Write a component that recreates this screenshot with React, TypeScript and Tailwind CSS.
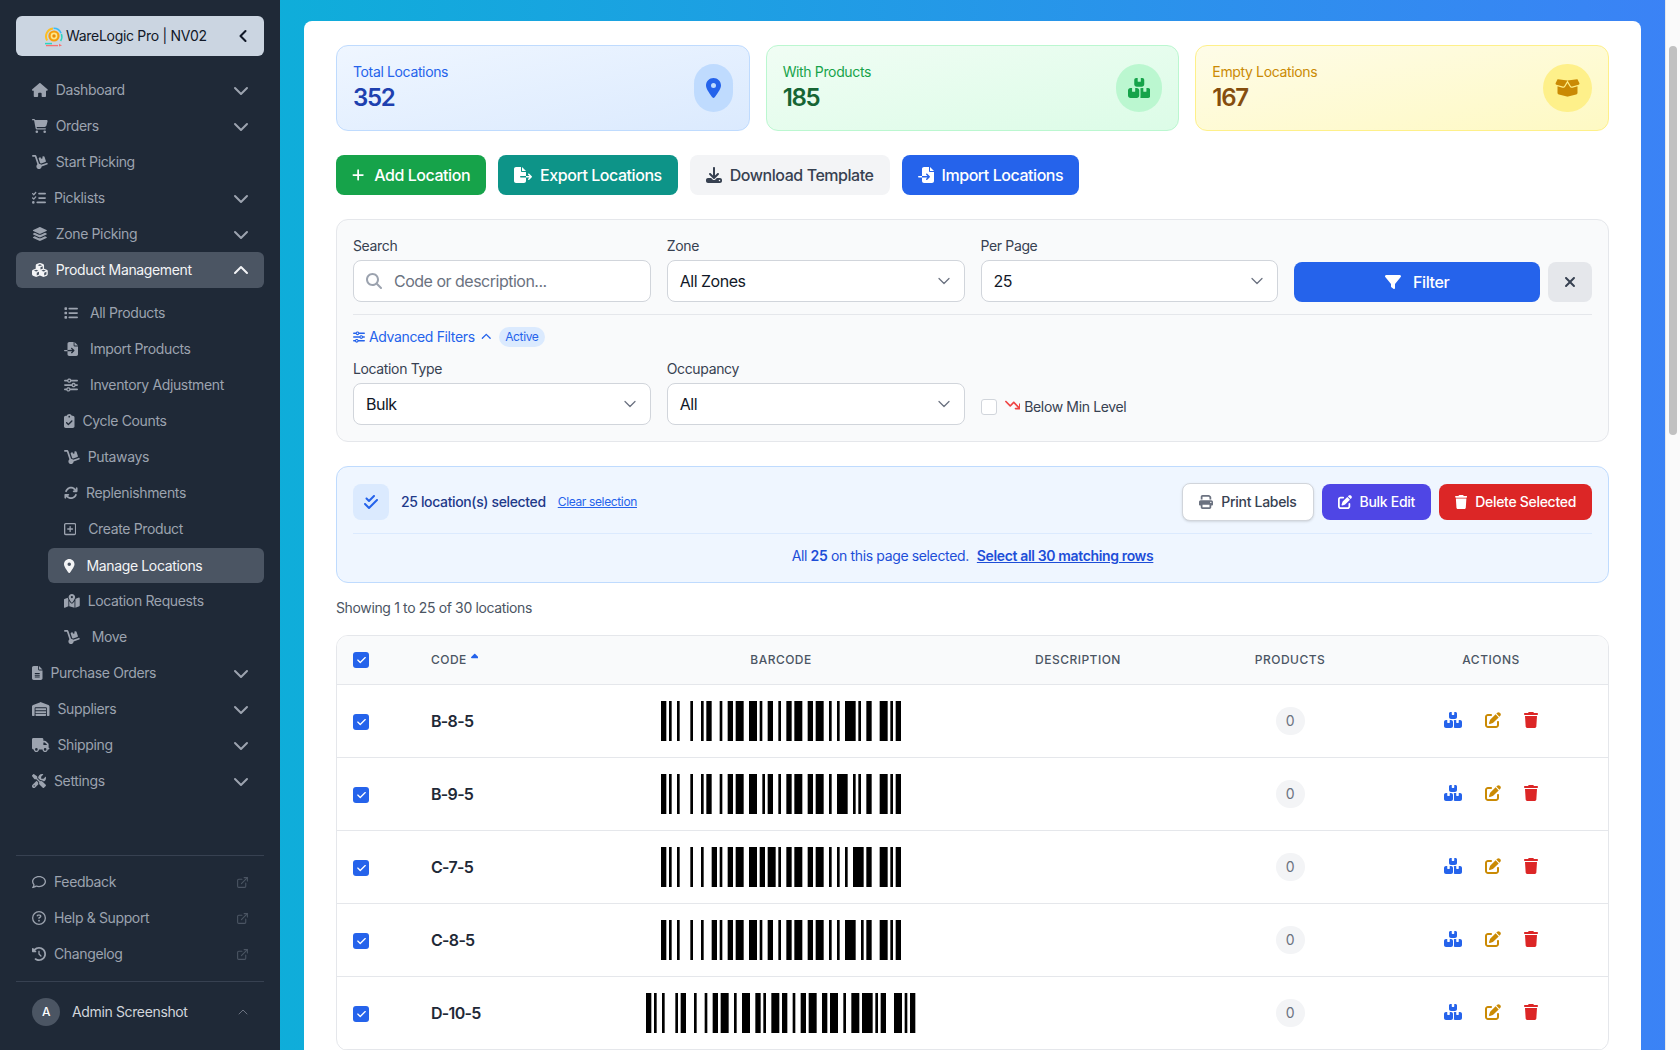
import type { ReactNode } from 'react';
import { ChevronDown, ChevronLeft, ChevronUp, ExternalLink } from 'lucide-react';
import {
  FaArrowsRotate,
  FaArrowTrendDown,
  FaBoxesStacked,
  FaBoxOpen,
  FaCartShopping,
  FaCheck,
  FaCheckDouble,
  FaChevronUp,
  FaClipboardCheck,
  FaClockRotateLeft,
  FaCubes,
  FaDolly,
  FaDownload,
  FaFileExport,
  FaFileImport,
  FaFileLines,
  FaFilter,
  FaHouse,
  FaLayerGroup,
  FaList,
  FaListCheck,
  FaLocationDot,
  FaMagnifyingGlass,
  FaMapLocationDot,
  FaPenToSquare,
  FaPlus,
  FaPrint,
  FaRegCircleQuestion,
  FaRegComment,
  FaRegSquarePlus,
  FaScrewdriverWrench,
  FaSliders,
  FaSortUp,
  FaTrash,
  FaTruck,
  FaWarehouse,
  FaXmark,
} from 'react-icons/fa6';

const CODE128 = [
  '212222', '222122', '222221', '121223', '121322', '131222', '122213', '122312', '132212', '221213',
  '221312', '231212', '112232', '122132', '122231', '113222', '123122', '123221', '223211', '221132',
  '221231', '213212', '223112', '312131', '311222', '321122', '321221', '312212', '322112', '322211',
  '212123', '212321', '232121', '111323', '131123', '131321', '112313', '132113', '132311', '211313',
  '231113', '231311', '112133', '112331', '132131', '113123', '113321', '133121', '313121', '211331',
  '231131', '213113', '213311', '213131', '311123', '311321', '331121', '312113', '312311', '332111',
  '314111', '221411', '431111', '111224', '111422', '121124', '121421', '141122', '141221', '112214',
  '112412', '122114', '122411', '142112', '142211', '241211', '221114', '413111', '241112', '134111',
  '111242', '121142', '121241', '114212', '124112', '124211', '411212', '421112', '421211', '212141',
  '214121', '412121', '111143', '111341', '131141', '114113', '114311', '411113', '411311', '113141',
  '114131', '311141', '411131', '211412', '211214', '211232', '2331112',
];

function Barcode({ value }: { value: string }) {
  const codes = [104, ...value.split('').map((c) => c.charCodeAt(0) - 32)];
  const check = codes.reduce((sum, code, i) => sum + code * (i === 0 ? 1 : i), 0) % 103;
  const pattern = [...codes, check, 106].map((c) => CODE128[c]).join('');
  const unit = 8 / 3;
  const bars: { x: number; w: number }[] = [];
  let pos = 0;
  pattern.split('').forEach((ch, i) => {
    const w = Number(ch);
    if (i % 2 === 0) bars.push({ x: pos, w });
    pos += w;
  });
  return (
    <svg width={pos * unit} height={40} viewBox={`0 0 ${pos} 40`} preserveAspectRatio="none" className="mx-auto">
      {bars.map((b) => (
        <rect key={b.x} x={b.x} y={0} width={b.w} height={40} fill="#000" />
      ))}
    </svg>
  );
}

function Logo() {
  return (
    <svg width="20" height="21" viewBox="0 0 20 21" className="shrink-0">
      <path d="M3.2 14.5A8 8 0 0 1 9 2.4" fill="none" stroke="#fbbf24" strokeWidth="2" />
      <path d="M9.5 2.2a8 8 0 0 1 7.6 5" fill="none" stroke="#38bdf8" strokeWidth="1.5" />
      <path d="M17.4 8a8 8 0 0 1-.8 7" fill="none" stroke="#2dd4bf" strokeWidth="1.5" />
      <circle cx="10" cy="10" r="5.6" fill="#f59e0b" />
      <circle cx="10" cy="10" r="3.4" fill="#fde68a" />
      <circle cx="10" cy="10" r="1.7" fill="#ea8a06" />
      <path d="M1 17.6h7" stroke="#2dd4bf" strokeWidth="1.5" />
      <path d="M2 19.6h12" stroke="#f87171" strokeWidth="1.3" />
      <path d="M15 17.8l3 1.8-3 1z" fill="#f87171" />
    </svg>
  );
}

interface NavEntry {
  label: string;
  icon: ReactNode;
  gap: string;
  chevron?: boolean;
}

// react-icons hard-codes a square box, so the glyph widths are written out
const i384 = 'h-[14px] w-[10.5px] shrink-0';
const i448 = 'h-[14px] w-[12.25px] shrink-0';
const i512 = 'h-[14px] w-[14px] shrink-0';
const i576 = 'h-[14px] w-[15.75px] shrink-0';
const i640 = 'h-[14px] w-[17.5px] shrink-0';

const topNav: NavEntry[] = [
  { label: 'Dashboard', icon: <FaHouse className={i576} />, gap: 'gap-2', chevron: true },
  { label: 'Orders', icon: <FaCartShopping className={i576} />, gap: 'gap-2', chevron: true },
  { label: 'Start Picking', icon: <FaDolly className={i576} />, gap: 'gap-2' },
  { label: 'Picklists', icon: <FaListCheck className={i512} />, gap: 'gap-2', chevron: true },
  { label: 'Zone Picking', icon: <FaLayerGroup className={i576} />, gap: 'gap-2', chevron: true },
];

const subNav: NavEntry[] = [
  { label: 'All Products', icon: <FaList className={i512} />, gap: 'gap-3' },
  { label: 'Import Products', icon: <FaFileImport className={i512} />, gap: 'gap-3' },
  { label: 'Inventory Adjustment', icon: <FaSliders className={i512} />, gap: 'gap-3' },
  { label: 'Cycle Counts', icon: <FaClipboardCheck className={i384} />, gap: 'gap-2' },
  { label: 'Putaways', icon: <FaDolly className={i576} />, gap: 'gap-2' },
  { label: 'Replenishments', icon: <FaArrowsRotate className={i512} />, gap: 'gap-2' },
  { label: 'Create Product', icon: <FaRegSquarePlus className={i448} />, gap: 'gap-3' },
];

const subNavAfter: NavEntry[] = [
  { label: 'Location Requests', icon: <FaMapLocationDot className={i576} />, gap: 'gap-2' },
  { label: 'Move', icon: <FaDolly className={i576} />, gap: 'gap-3' },
];

const lowerNav: NavEntry[] = [
  { label: 'Purchase Orders', icon: <FaFileLines className={i384} />, gap: 'gap-2', chevron: true },
  { label: 'Suppliers', icon: <FaWarehouse className={i640} />, gap: 'gap-2', chevron: true },
  { label: 'Shipping', icon: <FaTruck className={i640} />, gap: 'gap-2', chevron: true },
  { label: 'Settings', icon: <FaScrewdriverWrench className={i512} />, gap: 'gap-2', chevron: true },
];

const helpNav: NavEntry[] = [
  { label: 'Feedback', icon: <FaRegComment className={i512} />, gap: 'gap-2' },
  { label: 'Help & Support', icon: <FaRegCircleQuestion className={i512} />, gap: 'gap-2' },
  { label: 'Changelog', icon: <FaClockRotateLeft className={i512} />, gap: 'gap-2' },
];

function NavRow({ entry }: { entry: NavEntry }) {
  return (
    <div className={`flex h-9 items-center pl-4 pr-[11px] text-sm text-[#9ca3af] ${entry.gap}`}>
      {entry.icon}
      <span>{entry.label}</span>
      {entry.chevron && <ChevronDown size={24} strokeWidth={2} className="ml-auto translate-y-px" />}
    </div>
  );
}

function SubRow({ entry }: { entry: NavEntry }) {
  return (
    <div className={`ml-8 flex h-9 items-center pl-4 text-sm text-[#9ca3af] ${entry.gap}`}>
      {entry.icon}
      <span>{entry.label}</span>
    </div>
  );
}

function Sidebar() {
  return (
    <aside className="flex h-full w-[280px] shrink-0 flex-col bg-[#1f2937] px-4 pt-4">
      <div className="flex h-10 items-center gap-[2px] rounded-md bg-[#cbd5e1] pl-[28px] pr-[11px] text-sm text-[#111827]">
        <Logo />
        <span className="tracking-[-0.3px]">WareLogic Pro | NV02</span>
        <ChevronLeft size={20} strokeWidth={2.5} className="ml-auto" />
      </div>
      <nav className="mt-4">
        {topNav.map((entry) => (
          <NavRow key={entry.label} entry={entry} />
        ))}
        <div className="flex h-9 items-center gap-2 rounded-md bg-[#4b5563] pl-4 pr-[11px] text-sm text-[#f3f4f6]">
          <FaCubes className={i576} />
          <span>Product Management</span>
          <ChevronUp size={24} strokeWidth={2} className="ml-auto" />
        </div>
        <div className="pt-[7px]">
          {subNav.map((entry) => (
            <SubRow key={entry.label} entry={entry} />
          ))}
          <div className="ml-8 mt-px flex h-[35px] items-center gap-3 rounded-md bg-[#4b5563] pl-4 text-sm text-[#f3f4f6]">
            <FaLocationDot className={i384} />
            <span>Manage Locations</span>
          </div>
          {subNavAfter.map((entry) => (
            <SubRow key={entry.label} entry={entry} />
          ))}
        </div>
        {lowerNav.map((entry) => (
          <NavRow key={entry.label} entry={entry} />
        ))}
      </nav>
      <div className="mt-auto border-t border-[#374151] pb-[9px] pt-2">
        {helpNav.map((entry) => (
          <div key={entry.label} className={`flex h-9 items-center pl-4 pr-[15px] text-sm text-[#9ca3af] ${entry.gap}`}>
            {entry.icon}
            <span>{entry.label}</span>
            <ExternalLink size={13} strokeWidth={2} className="ml-auto text-[#4b5563]" />
          </div>
        ))}
      </div>
      <div className="flex h-[69px] items-start gap-3 border-t border-[#374151] pl-4 pr-[13px] pt-4">
        <div className="flex h-7 w-7 items-center justify-center rounded-full bg-[#4b5563] text-xs font-medium text-white">
          A
        </div>
        <span className="mt-1 text-sm text-[#d1d5db]">Admin Screenshot</span>
        <ChevronUp size={16} strokeWidth={1.5} className="ml-auto mt-[6px] text-[#6b7280]" />
      </div>
    </aside>
  );
}

function StatCard({
  label,
  value,
  box,
  labelColor,
  valueColor,
  circle,
  icon,
}: {
  label: string;
  value: string;
  box: string;
  labelColor: string;
  valueColor: string;
  circle: string;
  icon: ReactNode;
}) {
  return (
    <div className={`flex items-center justify-between rounded-xl border bg-linear-to-br p-4 ${box}`}>
      <div>
        <div className={`text-sm ${labelColor}`}>{label}</div>
        <div className={`text-2xl font-semibold tracking-[-1.3px] ${valueColor}`}>{value}</div>
      </div>
      <div className={`flex h-12 items-center justify-center rounded-full p-3 ${circle}`}>{icon}</div>
    </div>
  );
}

function Select({ value }: { value: string }) {
  return (
    <div className="flex h-[42px] items-center justify-between rounded-lg border border-[#d1d5db] bg-white pl-3 pr-[10px] text-base tracking-[-0.5px] text-[#111827]">
      <span>{value}</span>
      <ChevronDown size={20} strokeWidth={1.5} className="text-[#6b7280]" />
    </div>
  );
}

function Field({ label, children }: { label: string; children: ReactNode }) {
  return (
    <div>
      <div className="mb-1 text-sm text-[#374151]">{label}</div>
      {children}
    </div>
  );
}

function Check({ className = '' }: { className?: string }) {
  return (
    <span className={`flex h-4 w-4 items-center justify-center rounded-[3px] bg-[#2563eb] text-white ${className}`}>
      <FaCheck className="h-[10px] w-[9px]" />
    </span>
  );
}

const rows = ['B-8-5', 'B-9-5', 'C-7-5', 'C-8-5', 'D-10-5'];

export default function App() {
  return (
    <div className="flex h-screen overflow-hidden bg-linear-to-r/srgb from-[#06b6d4] to-[#3b82f6] font-['Inter',sans-serif] tracking-[-0.36px]">
      <Sidebar />
      <main className="min-w-0 flex-1 px-6 pt-[21px]">
        <div className="h-[1200px] rounded-t-lg bg-white px-8 pt-6">
          <div className="grid grid-cols-3 gap-4">
            <StatCard
              label="Total Locations"
              value="352"
              box="border-[#bfdbfe] from-[#eff6ff] to-[#dbeafe]"
              labelColor="text-[#2563eb]"
              valueColor="text-[#1e40af]"
              circle="bg-[#bfdbfe] text-[#2563eb]"
              icon={<FaLocationDot className="h-5 w-[15px]" />}
            />
            <StatCard
              label="With Products"
              value="185"
              box="border-[#bbf7d0] from-[#f0fdf4] to-[#dcfce7]"
              labelColor="text-[#16a34a]"
              valueColor="text-[#166534]"
              circle="bg-[#bbf7d0] text-[#16a34a]"
              icon={<FaBoxesStacked className="h-5 w-[22.5px]" />}
            />
            <StatCard
              label="Empty Locations"
              value="167"
              box="border-[#fef08a] from-[#fefce8] to-[#fef9c3]"
              labelColor="text-[#ca8a04]"
              valueColor="text-[#854d0e]"
              circle="bg-[#fef08a] text-[#ca8a04]"
              icon={<FaBoxOpen className="h-5 w-[25px]" />}
            />
          </div>

          <div className="mt-6 flex gap-3 text-base font-medium tracking-[-0.45px]">
            <button className="flex h-10 items-center gap-[10px] rounded-lg bg-[#16a34a] px-4 text-white">
              <FaPlus className="h-[14px] w-[12.25px]" />
              Add Location
            </button>
            <button className="flex h-10 items-center gap-2 rounded-lg bg-[#0d9488] px-4 text-white">
              <FaFileExport className="h-4 w-[18px]" />
              Export Locations
            </button>
            <button className="flex h-10 items-center gap-2 rounded-lg bg-[#f3f4f6] px-4 text-[#374151]">
              <FaDownload className="h-4 w-4" />
              Download Template
            </button>
            <button className="flex h-10 items-center gap-2 rounded-lg bg-[#2563eb] px-4 text-white">
              <FaFileImport className="h-4 w-4" />
              Import Locations
            </button>
          </div>

          <section className="mt-6 rounded-xl border border-[#e5e7eb] bg-[#f9fafb] p-4">
            <div className="grid grid-cols-4 items-end gap-4">
              <Field label="Search">
                <div className="flex h-[42px] items-center gap-3 rounded-lg border border-[#d1d5db] bg-white pl-3 text-base tracking-[-0.5px] text-[#6b7280]">
                  <FaMagnifyingGlass className="h-4 w-4 text-[#9ca3af]" />
                  <span>Code or description...</span>
                </div>
              </Field>
              <Field label="Zone">
                <Select value="All Zones" />
              </Field>
              <Field label="Per Page">
                <Select value="25" />
              </Field>
              <div className="flex gap-2">
                <button className="flex h-10 flex-1 items-center justify-center gap-3 rounded-lg bg-[#2563eb] text-base font-medium text-white">
                  <FaFilter className="h-4 w-4" />
                  Filter
                </button>
                <button className="flex h-10 w-11 items-center justify-center rounded-lg bg-[#e5e7eb] text-[#374151]">
                  <FaXmark className="h-4 w-3" />
                </button>
              </div>
            </div>
            <div className="mt-3 border-t border-[#e5e7eb] pt-3">
              <div className="flex h-5 items-center text-sm text-[#2563eb]">
                <FaSliders className="mr-1 h-3 w-3" />
                <span>Advanced Filters</span>
                <FaChevronUp className="ml-[6px] h-3 w-[10.5px]" />
                <span className="ml-2 flex h-5 items-center rounded-full bg-[#dbeafe] px-[6px] text-xs">Active</span>
              </div>
              <div className="mt-3 grid grid-cols-4 gap-4">
                <Field label="Location Type">
                  <Select value="Bulk" />
                </Field>
                <Field label="Occupancy">
                  <Select value="All" />
                </Field>
                <div className="flex items-end pb-[10px] text-sm text-[#374151]">
                  <span className="h-4 w-4 rounded-[3px] border border-[#d1d5db] bg-white" />
                  <FaArrowTrendDown className="ml-[8px] h-[14px] w-[15.75px] -translate-y-[3px] text-[#ef4444]" />
                  <span className="ml-1 leading-4">Below Min Level</span>
                </div>
              </div>
            </div>
          </section>

          <section className="mt-6 rounded-xl border border-[#bfdbfe] bg-[#eff6ff] p-4">
            <div className="flex items-center justify-between border-b border-[#dbeafe] pb-3">
              <div className="flex items-center">
                <div className="flex h-9 w-9 items-center justify-center rounded-lg bg-[#dbeafe] text-[#2563eb]">
                  <FaCheckDouble className="h-4 w-[14px]" />
                </div>
                <span className="ml-3 text-sm font-medium text-[#1e3a8a]">25 location(s) selected</span>
                <span className="ml-3 text-xs text-[#2563eb] underline">Clear selection</span>
              </div>
              <div className="flex items-center gap-2 text-sm font-medium tracking-[-0.3px]">
                <button className="flex h-[38px] items-center gap-2 rounded-lg border border-[#d1d5db] bg-white px-4 text-[#374151] shadow-sm">
                  <FaPrint className="h-[14px] w-[14px] text-[#6b7280]" />
                  Print Labels
                </button>
                <button className="flex h-9 items-center gap-2 rounded-lg bg-[#4f46e5] px-4 text-white">
                  <FaPenToSquare className="h-[14px] w-[14px]" />
                  Bulk Edit
                </button>
                <button className="flex h-9 items-center gap-2 rounded-lg bg-[#dc2626] px-4 text-white">
                  <FaTrash className="h-[14px] w-[12.25px]" />
                  Delete Selected
                </button>
              </div>
            </div>
            <div className="pt-3 text-center text-sm text-[#1d4ed8]">
              All <b className="font-semibold">25</b> on this page selected.
              <span className="ml-2 font-semibold underline">Select all 30 matching rows</span>
            </div>
          </section>

          <div className="mt-[15px] text-sm text-[#4b5563]">Showing 1 to 25 of 30 locations</div>

          <div className="mt-[17px] overflow-hidden rounded-xl border border-[#e5e7eb]">
            <table className="w-full table-fixed">
              <thead>
                <tr className="h-[48px] border-b border-[#e5e7eb] bg-[#f9fafb] text-xs uppercase tracking-[0.04em] text-[#4b5563]">
                  <th className="w-[70px] pl-4">
                    <Check />
                  </th>
                  <th className="w-[205px] pl-6 text-left font-medium">
                    <span className="inline-flex items-center gap-1">
                      CODE <FaSortUp className="h-3 w-[7.5px] -translate-y-px text-[#2563eb]" />
                    </span>
                  </th>
                  <th className="w-[338px] font-medium">BARCODE</th>
                  <th className="w-[256px] font-medium">DESCRIPTION</th>
                  <th className="w-[168px] font-medium">PRODUCTS</th>
                  <th className="font-medium">ACTIONS</th>
                </tr>
              </thead>
              <tbody>
                {rows.map((code) => (
                  <tr key={code} className="h-[73px] border-b border-[#e5e7eb]">
                    <td className="pl-4">
                      <Check className="translate-y-px" />
                    </td>
                    <td className="pl-6 text-base font-semibold tracking-[-0.7px] text-[#1f2937]">{code}</td>
                    <td>
                      <Barcode value={code} />
                    </td>
                    <td />
                    <td>
                      <div className="mx-auto flex h-7 w-[29px] items-center justify-center rounded-full bg-[#f3f4f6] text-sm text-[#6b7280]">
                        0
                      </div>
                    </td>
                    <td>
                      <div className="flex -translate-y-px items-center justify-center gap-[23px]">
                        <FaBoxesStacked className="h-4 w-[18px] text-[#2563eb]" />
                        <FaPenToSquare className="h-4 w-4 text-[#ca8a04]" />
                        <FaTrash className="h-4 w-[14px] text-[#dc2626]" />
                      </div>
                    </td>
                  </tr>
                ))}
              </tbody>
            </table>
          </div>
        </div>
      </main>
      <div className="w-[15px] shrink-0 border-l border-[#e8e8e8] bg-[#fafafa] pl-[3px] pt-[46px]">
        <div className="h-[389px] w-2 rounded bg-[#c1c1c1]" />
      </div>
    </div>
  );
}
